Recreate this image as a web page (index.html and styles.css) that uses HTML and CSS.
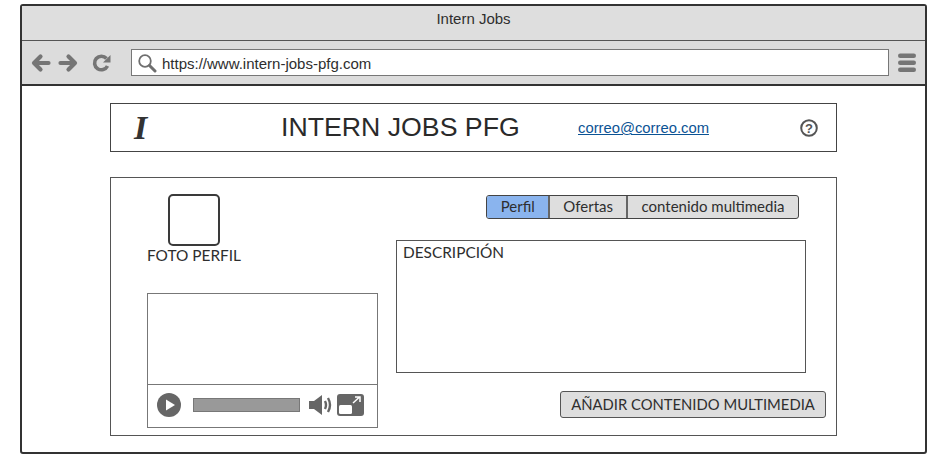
FILE: index.html
```html
<!DOCTYPE html>
<html lang="es">
<head>
<meta charset="utf-8">
<title>Intern Jobs</title>
<link rel="stylesheet" href="styles.css">
</head>
<body>
<div class="window">
  <div class="titlebar">Intern Jobs</div>
  <div class="toolbar">
    <div class="nav">
      <svg class="nav-icon" width="20" height="20" viewBox="0 0 20 20"><path d="M9.500 3.500 3 10 9.500 16.500M4 10H17.500" fill="none" stroke="#757575" stroke-width="4.200" stroke-linecap="round" stroke-linejoin="round"/></svg>
      <svg class="nav-icon" width="20" height="20" viewBox="0 0 20 20"><path d="M10.500 3.500 17 10 10.500 16.500M16 10H2.500" fill="none" stroke="#757575" stroke-width="4.200" stroke-linecap="round" stroke-linejoin="round"/></svg>
      <svg class="nav-icon reload" width="20" height="20" viewBox="0 0 20 20"><path d="M15.500 13A6.800 6.800 0 1 1 14.500 5.500" fill="none" stroke="#757575" stroke-width="3.600"/><path d="M11 9.500 18.500 9.500 18.500 2Z" fill="#757575"/></svg>
    </div>
    <div class="address">
      <svg width="20" height="20" viewBox="0 0 20 20"><circle cx="8" cy="8" r="5.800" fill="none" stroke="#6f6f6f" stroke-width="1.800"/><path d="M12.500 12.500 18 18" stroke="#6f6f6f" stroke-width="3" stroke-linecap="round"/></svg>
      <span class="url">https://www.intern-jobs-pfg.com</span>
    </div>
    <svg class="menu" width="18" height="20" viewBox="0 0 18 20"><rect y="0.500" width="18" height="4.500" rx="2.200" fill="#757575"/><rect y="7.500" width="18" height="4.500" rx="2.200" fill="#757575"/><rect y="14.500" width="18" height="4.500" rx="2.200" fill="#757575"/></svg>
  </div>
  <div class="content">
    <header class="site-header">
      <span class="logo">I</span>
      <h1 class="site-title">INTERN JOBS PFG</h1>
      <a class="mail" href="#">correo@correo.com</a>
      <svg class="help" width="18" height="18" viewBox="0 0 18 18"><circle cx="9" cy="9" r="7.800" fill="none" stroke="#555" stroke-width="2"/><text x="9" y="13.500" text-anchor="middle" class="help-mark">?</text></svg>
    </header>
    <section class="panel">
      <div class="left">
        <div class="avatar"></div>
        <div class="avatar-label">FOTO PERFIL</div>
        <div class="video">
          <div class="screen"></div>
          <div class="controls">
            <svg width="24" height="24" viewBox="0 0 24 24"><circle cx="12" cy="12" r="12" fill="#666"/><path d="M9 6.500 18 12 9 17.500Z" fill="#fff"/></svg>
            <div class="progress"></div>
            <svg width="24" height="22" viewBox="0 0 24 22"><path d="M1 7H6L14 1V21L6 15H1Z" fill="#666"/><path d="M17 7Q19 11 17 15M20 4Q24 11 20 18" fill="none" stroke="#666" stroke-width="2.400"/></svg>
            <svg class="expand" width="27" height="22" viewBox="0 0 27 22"><rect width="27" height="22" rx="3" fill="#666"/><rect x="2" y="11" width="13" height="9" rx="1.500" fill="#fff"/><path d="M16 9 22 3.500M18 3H23V8" fill="none" stroke="#fff" stroke-width="1.500"/></svg>
          </div>
        </div>
      </div>
      <div class="right">
        <nav class="tabs">
          <span class="tab active">Perfil</span>
          <span class="tab">Ofertas</span>
          <span class="tab">contenido multimedia</span>
        </nav>
        <div class="description">DESCRIPCIÓN</div>
        <button class="add" type="button">AÑADIR CONTENIDO MULTIMEDIA</button>
      </div>
    </section>
  </div>
</div>
</body>
</html>
```
FILE: styles.css
```css
* { box-sizing: border-box; }
html, body { margin: 0; padding: 0; background: #fff; }
body { width: 945px; height: 466px; overflow: hidden; padding: 4px 0 0 20px; font-family: "Lato", "Liberation Sans", sans-serif; color: #2e2e2e; }
.window { width: 907px; height: 450px; border: 2px solid #333; border-radius: 3px; display: flex; flex-direction: column; background: #fff; }
.titlebar { height: 35px; background: #dedede; border-bottom: 1px solid #555; display: flex; align-items: center; justify-content: center; font: 15px "Liberation Sans", sans-serif; padding: 0 0 10px 0; }
.toolbar { height: 45px; background: #dcdcdc; border-bottom: 2px solid #333; display: flex; align-items: center; padding: 0 9px 0 9px; }
.nav { display: flex; width: 100px; gap: 7px; align-items: center; }
.reload { margin-left: 7px; }
.address { width: 758px; height: 27px; background: #fff; border: 1px solid #777; display: flex; align-items: center; gap: 5px; padding-left: 5px; }
.url { font: 15px "Liberation Sans", sans-serif; color: #2e2e2e; padding-top: 1px; }
.menu { margin-left: 9px; }
.content { flex: 1; padding: 17px 88px 0 88px; }
.site-header { height: 49px; border: 1px solid #444; display: flex; align-items: center; }
.logo { font: italic 700 34px "Liberation Serif", serif; width: 170px; padding-left: 23px; color: #333; }
.site-title { margin: 0; width: 297px; font: 400 26.700px "Liberation Sans", sans-serif; color: #2a2a2a; }
.mail { width: 222px; padding-top: 1px; font: 14.800px "Liberation Sans", sans-serif; color: #0b5394; }
.help { display: block; }
.help-mark { font: 700 13px "Liberation Sans", sans-serif; fill: #555; }
.panel { margin-top: 25px; height: 259px; border: 1px solid #555; display: flex; padding: 16px 9px 7px 36px; }
.left { width: 231px; display: flex; flex-direction: column; }
.avatar { width: 52px; height: 52px; margin-left: 21px; border: 2px solid #3a3a3a; border-radius: 5px; }
.avatar-label { font-size: 15.400px; line-height: 18px; white-space: nowrap; }
.video { margin-top: 29px; height: 135px; border: 1px solid #777; display: flex; flex-direction: column; }
.screen { height: 91px; border-bottom: 1px solid #777; }
.controls { flex: 1; display: flex; align-items: center; padding: 0 0 3px 9px; }
.progress { width: 107px; height: 14px; margin: 0 8px 0 12px; background: #999; border: 1px solid #777; }
.expand { margin-left: 5px; }
.right { flex: 1; margin-left: 18px; display: flex; flex-direction: column; }
.tabs { align-self: flex-end; margin: 1px 28px 0 0; height: 24px; display: flex; border: 1px solid #444; border-radius: 3px; background: #dedede; font-size: 15px; }
.tab { display: flex; align-items: center; justify-content: center; padding: 0 13px 2px; border-left: 2px solid #666; }
.tab:last-child { padding: 0 13.500px 2px; }
.tab:first-child { border-left: 0; background: #8ab4ee; border-radius: 2px 0 0 2px; padding: 0 13.500px 2px; }
.description { margin-top: 21px; width: 410px; height: 133px; border: 1px solid #555; padding: 2px 6px; font-size: 15.400px; }
.add { align-self: flex-end; margin: 18px 1px 0 0; width: 266px; height: 27px; border: 1px solid #555; border-radius: 3px; background: #dedede; color: #2e2e2e; font: 14.800px "Lato", sans-serif; padding: 0 0 2px; }
```
